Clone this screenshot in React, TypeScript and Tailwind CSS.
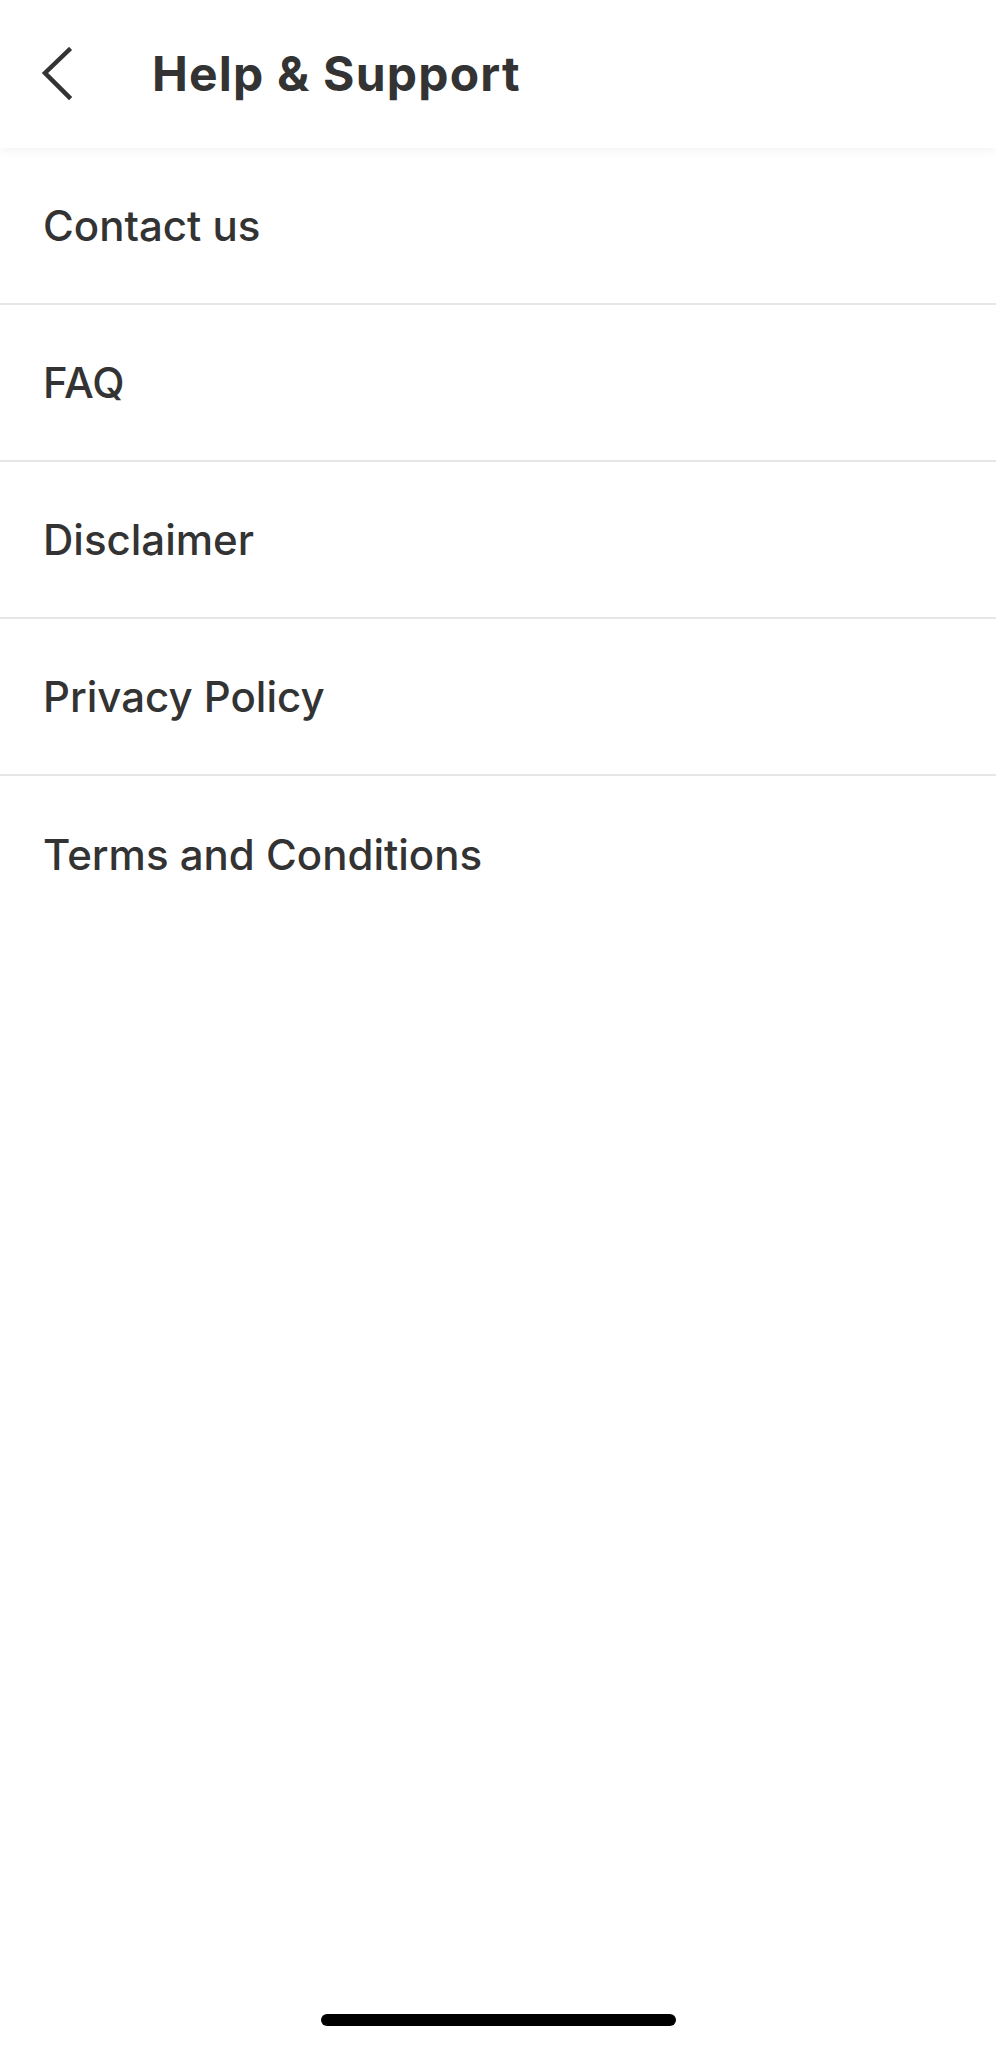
const items = ["Contact us", "FAQ", "Disclaimer", "Privacy Policy", "Terms and Conditions"];

export default function App() {
  return (
    <div className="relative flex h-[2048px] w-full flex-col bg-white font-['Inter',sans-serif] text-[#333333]">
      <header className="relative z-10 flex h-[148px] shrink-0 items-center bg-white shadow-[0_4px_8px_rgba(0,0,0,0.04)]">
        <button className="ml-[28px] flex h-[56px] w-[56px] items-center justify-center">
          <svg width="32" height="54" viewBox="0 0 32 54" fill="none">
            <path d="M29 3 L5 26 L29 50" stroke="#333333" strokeWidth="4.5" strokeLinecap="square" />
          </svg>
        </button>
        <h1 className="ml-[68px] text-[48px] font-bold tracking-[1.2px]">Help &amp; Support</h1>
      </header>

      <ul className="flex flex-col">
        {items.map((label, i) => (
          <li
            key={label}
            className={
              i < items.length - 1
                ? "flex h-[157px] items-center border-b-2 border-[#e6e6e6] px-[43px]"
                : "flex h-[157px] items-center px-[43px]"
            }
          >
            <span className="text-[42px] font-medium">{label}</span>
          </li>
        ))}
      </ul>

      <div className="mt-auto mb-[22px] flex justify-center">
        <div className="h-[12px] w-[355px] rounded-full bg-black" />
      </div>
    </div>
  );
}
